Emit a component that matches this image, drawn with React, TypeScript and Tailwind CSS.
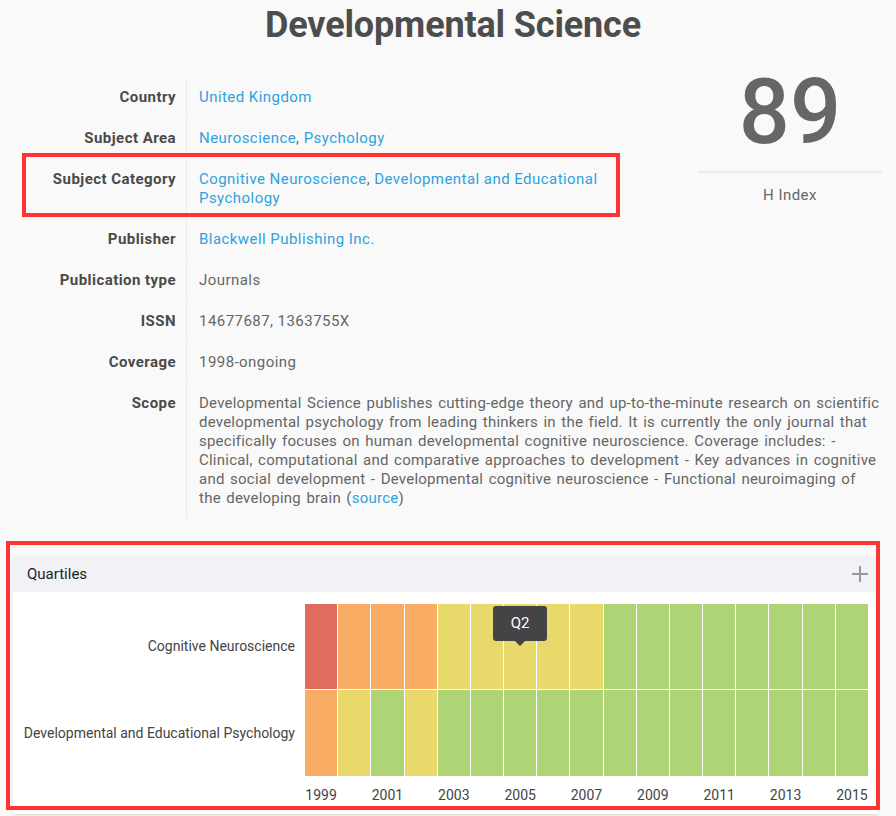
import React from "react";

const RED = "#e06c60";
const ORANGE = "#f9ad64";
const YELLOW = "#e9d86a";
const GREEN = "#aed475";

const years = Array.from({ length: 17 }, (_, i) => 1999 + i);

const row1 = [RED, ORANGE, ORANGE, ORANGE, YELLOW, YELLOW, YELLOW, YELLOW, YELLOW, GREEN, GREEN, GREEN, GREEN, GREEN, GREEN, GREEN, GREEN];
const row2 = [ORANGE, YELLOW, GREEN, YELLOW, GREEN, GREEN, GREEN, GREEN, GREEN, GREEN, GREEN, GREEN, GREEN, GREEN, GREEN, GREEN, GREEN];

function Row({ label, children, valueClass = "" }: { label: string; children: React.ReactNode; valueClass?: string }) {
  return (
    <div className="flex">
      <div className="w-[172px] shrink-0 py-[11px] pr-[10px] text-right font-bold text-[#4a4a4a] leading-[19px]">{label}</div>
      <div className={"flex-1 my-px border-l border-[#ebebeb] py-[10px] pl-[12px] leading-[19px] text-[#666] " + valueClass}>{children}</div>
    </div>
  );
}

const A = ({ children }: { children: React.ReactNode }) => (
  <a className="text-[#2fa1df]">{children}</a>
);

export default function App() {
  return (
    <div
      className="min-h-[816px] bg-[#f9f9f9] text-[15px] overflow-hidden"
      style={{ fontFamily: "Roboto, 'Liberation Sans', sans-serif" }}
    >
      <h1 className="pt-[3px] pl-[10px] text-center text-[36px] font-bold leading-[44px] text-[#4d4d4d] tracking-[-0.15px]">
        Developmental Science
      </h1>

      <div className="mt-[30px] ml-[14px] mr-[14px] tracking-[0.45px]">
        <div className="flex">
          <div className="w-[606px]">
            <Row label="Country">
              <A>United Kingdom</A>
            </Row>
            <Row label="Subject Area">
              <A>Neuroscience</A>, <A>Psychology</A>
            </Row>
            <div className="relative">
              <Row label="Subject Category">
                <A>Cognitive Neuroscience</A>, <A>Developmental and Educational Psychology</A>
              </Row>
              <div className="absolute top-[-6px] left-[8px] right-0 bottom-[2px] border-[4px] border-[#ff3333] pointer-events-none" />
            </div>
          </div>
          <div className="ml-auto w-[184px] text-center tracking-normal">
            <div className="mt-[-9px] text-[90px] leading-[90px] font-medium text-[#666]">89</div>
            <div className="mt-[13px] border-t-2 border-[#ececec]" />
            <div className="mt-[13px] text-[15px] leading-[19px] text-[#666] tracking-[0.45px]">H Index</div>
          </div>
        </div>
        <Row label="Publisher">
          <A>Blackwell Publishing Inc.</A>
        </Row>
        <Row label="Publication type">Journals</Row>
        <Row label="ISSN">14677687, 1363755X</Row>
        <Row label="Coverage">1998-ongoing</Row>
        <Row label="Scope" valueClass="pr-[2px] tracking-[0.23px] [word-spacing:1.5px]">
          Developmental Science publishes cutting-edge theory and up-to-the-minute research on scientific
          developmental psychology from leading thinkers in the field. It is currently the only journal that
          specifically focuses on human developmental cognitive neuroscience. Coverage includes: - Clinical,
          computational and comparative approaches to development - Key advances in cognitive and social
          development - Developmental cognitive neuroscience - Functional neuroimaging of the developing brain (
          <A>source</A>)
        </Row>
      </div>

      <div className="relative mt-[37px] ml-[13px] w-[865px]">
        <div className="bg-white shadow-[0_1px_2px_rgba(0,0,0,0.15)]">
          <div className="flex h-[36px] items-center justify-between bg-[#f1f2f6] pl-[14px] pr-[8px]">
            <span className="text-[15px] text-[#222]">Quartiles</span>
            <svg width="18" height="18" viewBox="0 0 18 18" className="mr-[1px]">
              <path d="M9 1v16M1 9h16" stroke="#999" strokeWidth="2" fill="none" />
            </svg>
          </div>
          <div className="flex pt-[12px] pr-[10px] pb-[10px]">
            <div className="w-[292px] shrink-0 pr-[10px] text-right text-[14px] text-[#444]">
              <div className="flex h-[85px] items-center justify-end">Cognitive Neuroscience</div>
              <div className="mt-px flex h-[86px] items-center justify-end">Developmental and Educational Psychology</div>
            </div>
            <div className="flex-1">
              <div className="relative">
                <div className="grid grid-cols-[repeat(17,minmax(0,1fr))] gap-px bg-white">
                  {row1.map((c, i) => (
                    <div key={"a" + i} className="h-[85px]" style={{ backgroundColor: c }} />
                  ))}
                  {row2.map((c, i) => (
                    <div key={"b" + i} className="h-[86px]" style={{ backgroundColor: c }} />
                  ))}
                </div>
                <div className="absolute left-[188px] top-[2px] flex h-[35px] w-[54px] items-center justify-center rounded-[3px] bg-[#444446] text-[15px] text-white">
                  Q2
                  <div className="absolute bottom-[-5px] left-1/2 h-0 w-0 -translate-x-1/2 border-x-[5px] border-t-[5px] border-x-transparent border-t-[#444446]" />
                </div>
              </div>
              <div className="mt-[10px] grid grid-cols-[repeat(17,minmax(0,1fr))] gap-px text-[14px] leading-[18px] text-[#444]">
                {years.map((y, i) => (
                  <div key={y} className="text-center">
                    {i % 2 === 0 ? y : ""}
                  </div>
                ))}
              </div>
            </div>
          </div>
        </div>
        <div className="pointer-events-none absolute left-[-7px] top-[-15px] h-[269px] w-[874px] border-[4px] border-[#ff3333]" />
      </div>
    </div>
  );
}
